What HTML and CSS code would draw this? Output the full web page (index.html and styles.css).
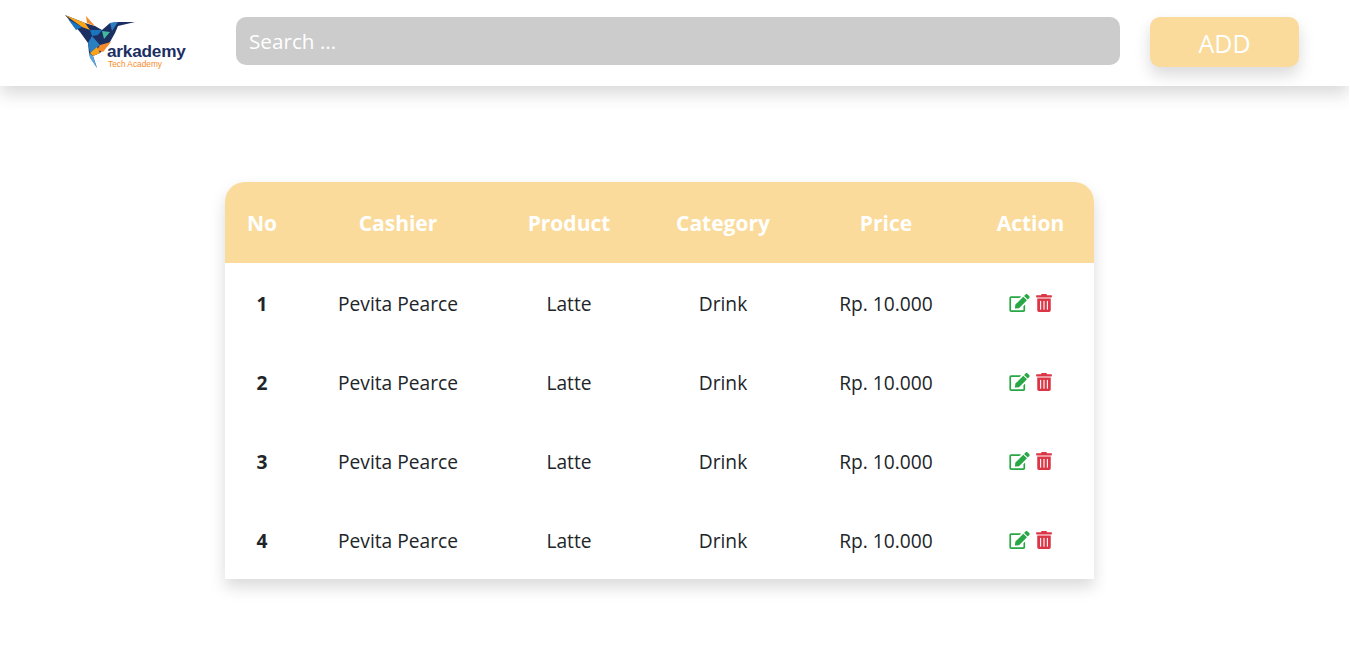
FILE: index.html
```html
<!DOCTYPE html>
<html lang="en">
<head>
  <meta charset="UTF-8" />
  <meta name="viewport" content="width=device-width, initial-scale=1.0" />
  <title>Arkademy Cashier</title>
  <link rel="stylesheet" href="styles.css">
</head>
<body>
  <svg class="sprite">
    <symbol id="i-edit" viewBox="0 0 576 512">
      <path d="M402.3 344.9l32-32c5-5 13.7-1.5 13.7 5.7V464c0 26.5-21.5 48-48 48H48c-26.5 0-48-21.5-48-48V112c0-26.5 21.5-48 48-48h273.5c7.1 0 10.7 8.6 5.7 13.7l-32 32c-1.5 1.5-3.5 2.3-5.7 2.3H48v352h352V350.5c0-2.1.8-4.1 2.3-5.6z"/>
      <path d="M402.6 83.2l90.2 90.2c3.8 3.8 3.8 10 0 13.8L274.4 405.6l-92.8 10.3c-12.4 1.4-22.9-9.1-21.5-21.5l10.3-92.8L388.8 83.2c3.8-3.8 10-3.8 13.8 0zm162-22.9l-48.8-48.8c-15.2-15.2-39.9-15.2-55.2 0l-35.4 35.4c-3.8 3.8-3.8 10 0 13.8l90.2 90.2c3.8 3.8 10 3.8 13.8 0l35.4-35.4c15.2-15.3 15.2-40 0-55.2z"/>
    </symbol>
    <symbol id="i-trash" viewBox="0 0 448 512">
      <path d="M32 464a48 48 0 0 0 48 48h288a48 48 0 0 0 48-48V128H32zm272-256a16 16 0 0 1 32 0v224a16 16 0 0 1-32 0zm-96 0a16 16 0 0 1 32 0v224a16 16 0 0 1-32 0zm-96 0a16 16 0 0 1 32 0v224a16 16 0 0 1-32 0zM432 32H312l-9.4-18.7A24 24 0 0 0 281.1 0H166.8a23.72 23.72 0 0 0-21.4 13.3L136 32H16A16 16 0 0 0 0 48v32a16 16 0 0 0 16 16h416a16 16 0 0 0 16-16V48a16 16 0 0 0-16-16z"/>
    </symbol>
  </svg>

  <div class="page">
    <header class="navbar">
      <div class="logo">
        <svg class="logo-bird" viewBox="60 10 80 62" width="80" height="62">
          <polygon points="65,15 85,23 95,26 102,30 110,23 118,22 135,22 118,26 115,33 110,42 100,53 93,56 97,68 90,57 89,53 88,43 80,32" fill="#1c2f63"/>
          <polygon points="65,15 85,23 90,30 82,27" fill="#f9a51a"/>
          <polygon points="68,19 82,27 76,30" fill="#1b75bc"/>
          <polygon points="86,16 95,26 87,23" fill="#f58a2a"/>
          <polygon points="90,30 102,30 98,35 92,36" fill="#1b75bc"/>
          <polygon points="88,43 92,36 100,45 90,53" fill="#2a7fc1"/>
          <polygon points="98,35 110,32 112,33 100,45" fill="#1c2f63"/>
          <polygon points="102,31 110,32 104,39" fill="#43b89c"/>
          <polygon points="110,23 118,22 112,31" fill="#2a7fc1"/>
          <polygon points="100,45 111,42 103,52 97,50" fill="#f58a2a"/>
          <polygon points="90,53 97,47 100,53 93,56" fill="#f9a51a"/>
          <polygon points="89,53 93,56 97,68 90,58" fill="#5aa7dc"/>
        </svg>
        <div class="logo-text">
          <span class="logo-name">arkademy</span>
          <span class="logo-sub">Tech Academy</span>
        </div>
      </div>
      <input class="search" type="text" placeholder="Search ..." />
      <button class="add-btn">ADD</button>
    </header>

    <main class="content">
      <div class="card">
        <table class="orders">
          <colgroup>
            <col class="col-no"><col class="col-cashier"><col class="col-product">
            <col class="col-category"><col class="col-price"><col class="col-action">
          </colgroup>
          <thead>
            <tr>
              <th>No</th>
              <th>Cashier</th>
              <th>Product</th>
              <th>Category</th>
              <th>Price</th>
              <th>Action</th>
            </tr>
          </thead>
          <tbody>
            <tr>
              <td class="num">1</td><td>Pevita Pearce</td><td>Latte</td><td>Drink</td><td>Rp. 10.000</td>
              <td class="actions">
                <svg class="icon edit"><use href="#i-edit"/></svg>
                <svg class="icon trash"><use href="#i-trash"/></svg>
              </td>
            </tr>
            <tr>
              <td class="num">2</td><td>Pevita Pearce</td><td>Latte</td><td>Drink</td><td>Rp. 10.000</td>
              <td class="actions">
                <svg class="icon edit"><use href="#i-edit"/></svg>
                <svg class="icon trash"><use href="#i-trash"/></svg>
              </td>
            </tr>
            <tr>
              <td class="num">3</td><td>Pevita Pearce</td><td>Latte</td><td>Drink</td><td>Rp. 10.000</td>
              <td class="actions">
                <svg class="icon edit"><use href="#i-edit"/></svg>
                <svg class="icon trash"><use href="#i-trash"/></svg>
              </td>
            </tr>
            <tr>
              <td class="num">4</td><td>Pevita Pearce</td><td>Latte</td><td>Drink</td><td>Rp. 10.000</td>
              <td class="actions">
                <svg class="icon edit"><use href="#i-edit"/></svg>
                <svg class="icon trash"><use href="#i-trash"/></svg>
              </td>
            </tr>
          </tbody>
        </table>
      </div>
    </main>
  </div>
</body>
</html>
```
FILE: styles.css
```css
* {
  box-sizing: border-box;
}
html, body {
  height: 100%;
}
body {
  margin: 0;
  font-family: "Open Sans", "Noto Sans", sans-serif;
  color: #212529;
  background: #fff;
  overflow: hidden;
}
.sprite {
  display: none;
}
.page {
  height: 100%;
  margin-right: 1px;
  overflow: hidden;
}
.navbar {
  display: flex;
  align-items: flex-start;
  height: 86px;
  padding: 17px 50px 0 60px;
  background: #fff;
  box-shadow: 0 8px 16px rgba(0,0,0,0.15);
}
.logo {
  position: relative;
  width: 176px;
  height: 62px;
  margin-top: -7px;
  flex-shrink: 0;
}
.logo-bird {
  display: block;
}
.logo-text {
  position: absolute;
  left: 47px;
  top: 32px;
  display: flex;
  flex-direction: column;
}
.logo-name {
  font-family: "Liberation Sans", sans-serif;
  font-size: 17.2px;
  line-height: 18px;
  font-weight: 700;
  color: #1c2f63;
  letter-spacing: -0.2px;
}
.logo-sub {
  font-family: "Liberation Sans", sans-serif;
  font-size: 8.3px;
  line-height: 8px;
  color: #f58a2a;
  margin-left: 1px;
}
.search {
  flex: 1;
  height: 48px;
  padding: 0 13px;
  border: none;
  border-radius: 10px;
  background: #ccc;
  color: #fff;
  font-family: inherit;
  font-size: 20.7px;
  outline: none;
}
.search::placeholder {
  color: #fff;
  opacity: 1;
}
.add-btn {
  width: 149px;
  height: 50px;
  margin-left: 30px;
  padding-top: 2px;
  border: none;
  border-radius: 10px;
  background: #fadb9b;
  color: #fff;
  font-family: inherit;
  font-size: 25px;
  box-shadow: 0 8px 16px rgba(0,0,0,0.15);
}
.content {
  padding: 96px 0 0 225px;
}
.card {
  width: 869px;
  border-radius: 20px 20px 0 0;
  background: #fff;
  box-shadow: 0 8px 16px rgba(0,0,0,0.15);
  overflow: hidden;
}
.orders {
  width: 100%;
  border-collapse: collapse;
  table-layout: fixed;
  text-align: center;
}
.col-no { width: 74px; }
.col-cashier { width: 198px; }
.col-product { width: 144px; }
.col-category { width: 164px; }
.col-price { width: 162px; }
.col-action { width: 127px; }
.orders th {
  height: 81px;
  padding: 0;
  background: #fadb9b;
  color: #fff;
  font-size: 21px;
  font-weight: 700;
}
.orders td {
  height: 79px;
  padding: 2px 0 0;
  font-size: 19.2px;
}
.orders .actions {
  padding: 0;
  white-space: nowrap;
}
.orders .num {
  font-weight: 700;
}
.icon {
  display: inline-block;
  height: 18px;
  margin-top: -3px;
  vertical-align: middle;
  fill: currentColor;
}
.edit {
  width: 21px;
  color: #28a745;
}
.trash {
  width: 16px;
  margin-left: 1px;
  color: #dc3545;
}
```
